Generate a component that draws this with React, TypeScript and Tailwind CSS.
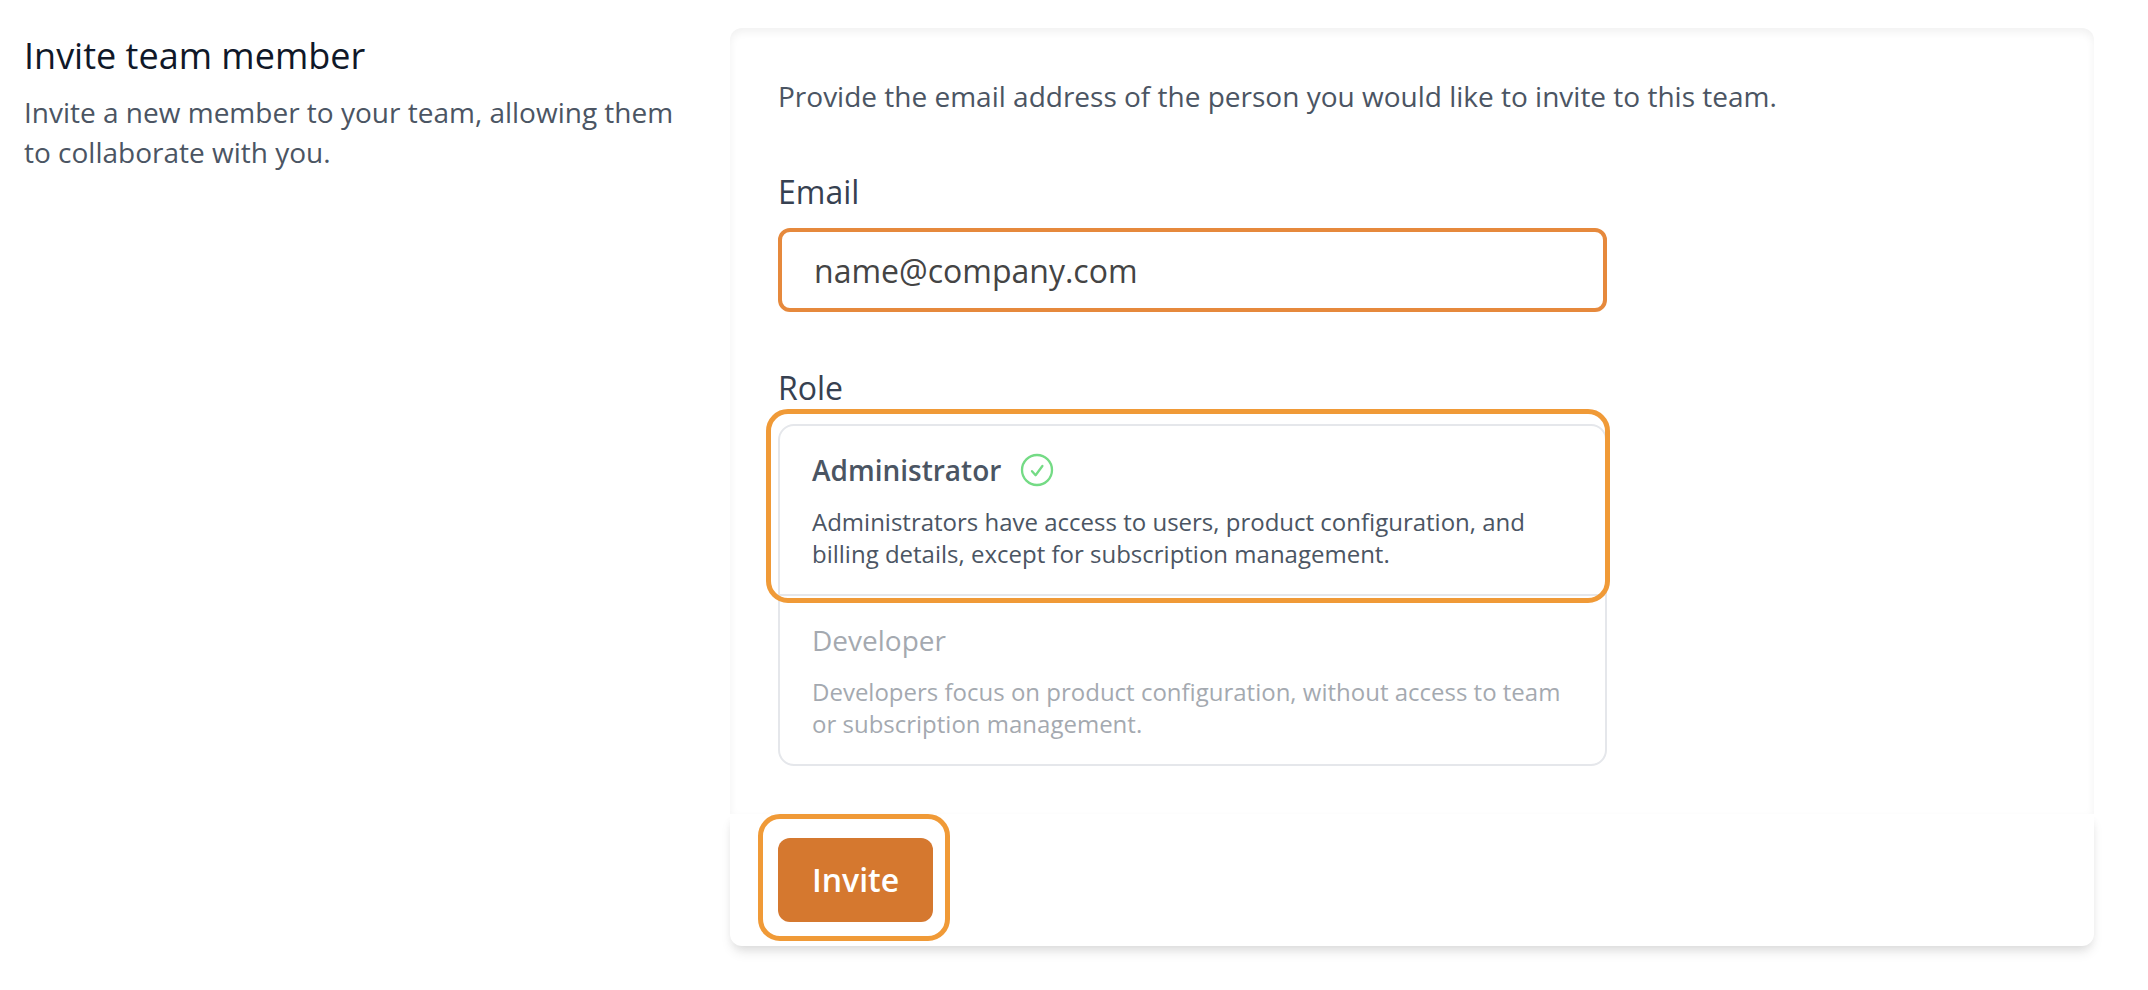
import { useState } from 'react';

interface Role {
  key: string;
  name: string;
  description: string;
}

const ROLES: Role[] = [
  {
    key: 'admin',
    name: 'Administrator',
    description:
      'Administrators have access to users, product configuration, and billing details, except for subscription management.',
  },
  {
    key: 'developer',
    name: 'Developer',
    description:
      'Developers focus on product configuration, without access to team or subscription management.',
  },
];

function CheckCircle() {
  return (
    <svg
      className="ml-4 size-10 text-[#74db85]"
      viewBox="0 0 40 40"
      fill="none"
      stroke="currentColor"
      strokeWidth="2.3"
      strokeLinecap="round"
      strokeLinejoin="round"
      aria-hidden="true"
    >
      <circle cx="20" cy="20" r="15" />
      <path d="M15 21.2l3.6 4L25.4 16" />
    </svg>
  );
}

export default function App() {
  const [email, setEmail] = useState('');
  const [selected, setSelected] = useState('admin');

  return (
    <div className="grid grid-cols-3 gap-12 bg-white pt-7 pb-11 pl-6 pr-[54px] font-['Open_Sans',sans-serif]">
      <div>
        <h3 className="text-[36px] leading-[56px] text-gray-900">Invite team member</h3>
        <p className="mt-2 text-[28px] leading-[40px] text-[#4b5563]">
          Invite a new member to your team, allowing them to collaborate with you.
        </p>
      </div>

      <form className="col-span-2" onSubmit={(e) => e.preventDefault()}>
        <div className="grid grid-cols-6 gap-x-12 gap-y-14 rounded-t-xl p-12 shadow-[inset_0_4px_8px_0_rgba(0,0,0,0.06)]">
          <p className="col-span-6 text-[28px] leading-[40px] text-[#4b5563]">
            Provide the email address of the person you would like to invite to this team.
          </p>

          <div className="col-span-4">
            <label htmlFor="email" className="block text-[32px] leading-[40px] text-[#374151]">
              Email
            </label>
            <input
              id="email"
              type="email"
              value={email}
              onChange={(e) => setEmail(e.target.value)}
              placeholder="name@company.com"
              className="mt-4 block h-[84px] w-full rounded-xl border-4 border-[#e6893c] px-8 text-[32px] text-[#444444] outline-none placeholder:text-[#444444]"
            />
          </div>

          <div className="col-span-4">
            <div id="role-label" className="text-[32px] leading-[40px] text-[#374151]">
              Role
            </div>
            <div
              role="group"
              aria-labelledby="role-label"
              className="mt-4 rounded-2xl border-2 border-[#e5e7eb]"
            >
              {ROLES.map((role, i) => (
                <button
                  key={role.key}
                  type="button"
                  aria-pressed={selected === role.key}
                  onClick={() => setSelected(role.key)}
                  className={`relative block w-full px-8 py-6 text-left text-[#4b5563] ${
                    i > 0 ? '' : 'border-b-2 border-[#e5e7eb]'
                  }`}
                >
                  <div className={selected === role.key ? '' : 'opacity-50'}>
                    <div className="flex h-10 items-center text-[28px] leading-[40px]">
                      <span className={selected === role.key ? 'font-semibold' : ''}>{role.name}</span>
                      {selected === role.key && <CheckCircle />}
                    </div>
                    <div className="mt-4 text-[24px] leading-[32px]">{role.description}</div>
                  </div>

                  {/* Highlight ring */}
                  {selected === role.key && (
                    <span className="pointer-events-none absolute -top-[17px] -right-[5px] -bottom-[9px] -left-[14px] z-10 rounded-[22px] border-5 border-[#f09a37]" />
                  )}
                </button>
              ))}
            </div>
          </div>
        </div>

        <div className="flex rounded-b-xl bg-white px-12 py-6 shadow-[0_8px_12px_-2px_rgba(0,0,0,0.1),0_4px_8px_-2px_rgba(0,0,0,0.06)]">
          <div className="relative">
            <button
              type="submit"
              className="h-[84px] rounded-xl bg-[#d5782f] px-[34px] text-[32px] font-semibold text-white"
            >
              Invite
            </button>
            <span className="pointer-events-none absolute -top-6 -right-[17px] -bottom-[19px] -left-5 rounded-[22px] border-5 border-[#f09a37]" />
          </div>
        </div>
      </form>
    </div>
  );
}
